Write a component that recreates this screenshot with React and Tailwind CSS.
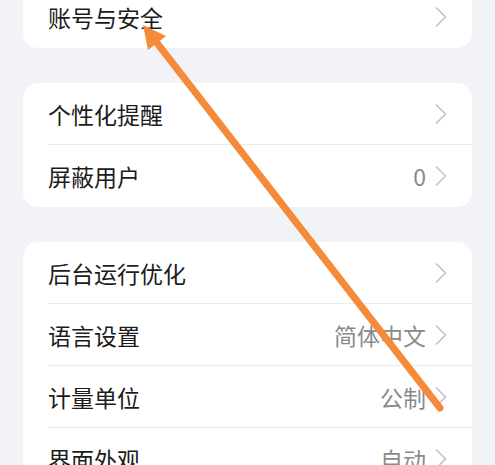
const groups = [
  [{ label: '账号与安全' }],
  [{ label: '个性化提醒' }, { label: '屏蔽用户', value: '0' }],
  [
    { label: '后台运行优化' },
    { label: '语言设置', value: '简体中文' },
    { label: '计量单位', value: '公制' },
    { label: '界面外观', value: '自动' },
  ],
];

function Chevron() {
  return (
    <svg width="12" height="22" viewBox="0 0 12 22" fill="none">
      <path d="M1.5 2 L10.5 11 L1.5 20" stroke="#c3c3c5" strokeWidth="1.7" strokeLinecap="round" strokeLinejoin="round" />
    </svg>
  );
}

function Row({ label, value, last }) {
  return (
    <div className="relative flex h-[62px] items-center pl-[25px] pr-[25px]">
      <span className="flex-1 text-[23px] text-[#1c1c1c]">{label}</span>
      {value && <span className="mr-[9px] text-[23px] text-[#8a8a8a]">{value}</span>}
      <Chevron />
      {!last && <div className="absolute bottom-0 left-[25px] right-0 h-px bg-[#ebebeb]" />}
    </div>
  );
}

export default function App() {
  return (
    <div
      className="relative h-[465px] w-[495px] overflow-hidden bg-[#f2f3f7] px-[23px]"
      style={{ fontFamily: '"Noto Sans CJK SC", "Noto Sans", sans-serif' }}
    >
      <div className="-mt-[14px] flex flex-col gap-[35px]">
        {groups.map((rows, gi) => (
          <div key={gi} className="overflow-hidden rounded-[15px] bg-white">
            {rows.map((r, i) => (
              <Row key={r.label} {...r} last={i === rows.length - 1} />
            ))}
          </div>
        ))}
      </div>

      <svg className="absolute inset-0" width="495" height="465" viewBox="0 0 495 465">
        <line x1="440" y1="408" x2="157" y2="43" stroke="#f58b3a" strokeWidth="7" strokeLinecap="round" />
        <polygon points="143,25 166,36 148,50" fill="#f58b3a" />
      </svg>
    </div>
  );
}
